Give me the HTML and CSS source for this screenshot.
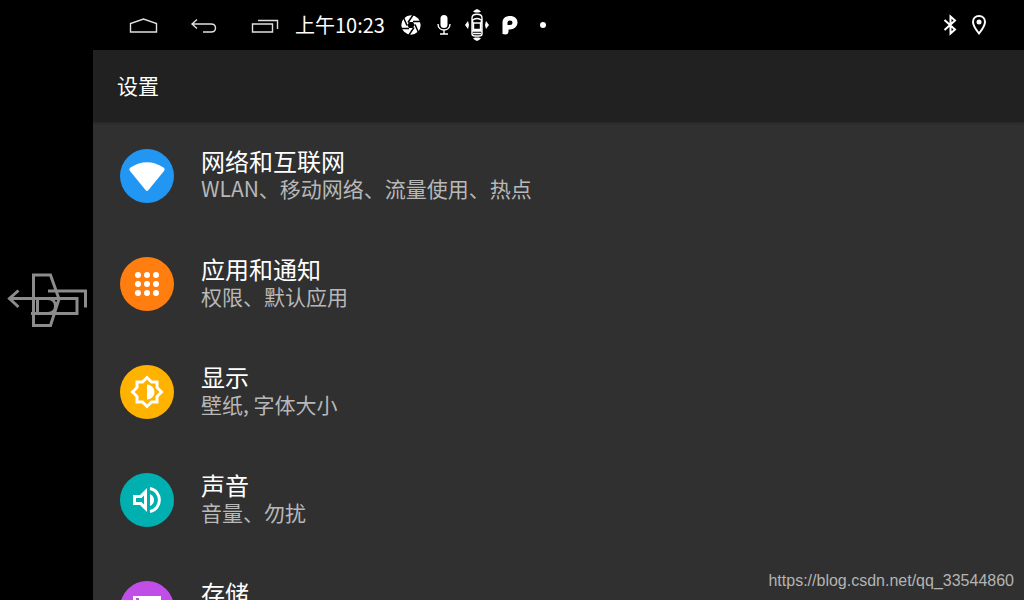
FILE: index.html
```html
<!DOCTYPE html>
<html lang="zh-CN">
<head>
<meta charset="utf-8">
<title>设置</title>
<link rel="stylesheet" href="styles.css">
</head>
<body>
<header class="status">
  <nav class="keys">
    <button class="key" type="button" aria-label="Home"><svg class="line" width="30" height="30" viewBox="0 0 30 30"><path d="M2.500 22V13.500L15.500 9L28.500 13.500V22Z"/></svg></button>
    <button class="key" type="button" aria-label="Back"><svg class="line" width="30" height="30" viewBox="0 0 30 30"><path d="M8 9.500L3 14L8 18.500M3 14H22C28 14 28 22 22 22H14"/></svg></button>
    <button class="key" type="button" aria-label="Recents"><svg class="line" width="30" height="30" viewBox="0 0 30 30"><path d="M2.500 14H22.500V22H2.500ZM8 10.500H27.500V19"/></svg></button>
  </nav>
  <time class="clock">上午10:23</time>
  <div class="tray">
    <span class="slot"><svg width="20" height="20" viewBox="0 0 20 20"><circle cx="10" cy="10" r="9.700" fill="#fff"/><path class="blades" d="M7 7.500L12 0M12 6.500H20M14 9.500L17.500 17.500M13 12.500L8 20M8 13.500H0M6 10.500L2.500 2.500"/><path d="M8.300 7L12 7L13.700 10L11.700 13L8 13L6.300 10Z"/></svg></span>
    <span class="slot"><svg width="16" height="22" viewBox="0 0 16 22"><rect x="4.500" y="1" width="7" height="13" rx="3.500" fill="#fff"/><path class="thin" d="M2 10C2 18 14 18 14 10M8 16V20M4 20H12"/></svg></span>
    <span class="slot"><svg width="26" height="34" viewBox="0 0 26 34"><path d="M9 3.500L11 2L13 1L15 2L17 3.500L15 4.500H11ZM9 30.500L11 32L13 33L15 32L17 30.500L15 29.500H11ZM4 13L1 17L4 21L5 17ZM22 13L25 17L22 21L21 17Z" fill="#fff"/><path class="thin" d="M8 10C8 5 18 5 18 10V26Q18 28 15 28H11Q8 28 8 26ZM8 12.500Q13 8.500 18 12.500L16.500 15H9.500L8 12.500M9.500 15V21.500H16.500V15M8 23H18M9 25.500H17"/></svg></span>
    <span class="slot"><svg width="18" height="22" viewBox="0 0 18 22"><path d="M1.500 20V8.500C1.500 4 5 2 9 2C13.500 2 16.500 4.500 16.500 8.500C16.500 12.500 13 15.500 9 15.500H7.500V18Q7 20.500 4.500 20.500Z" fill="#fff"/><path d="M6.500 11V8.500Q6.500 6.500 9 6.500T11.500 8.700T9 11Z"/></svg></span>
    <span class="slot"><svg width="8" height="8" viewBox="0 0 8 8"><circle cx="4" cy="4" r="3" fill="#fff"/></svg></span>
  </div>
  <div class="system">
    <span class="slot-narrow"><svg width="16" height="22" viewBox="0 0 16 22"><path class="medium" d="M2.500 6L13 15.500L8.500 19.500V2.500L13 6.500L2.500 16"/></svg></span>
    <span class="slot-narrow"><svg width="16" height="22" viewBox="0 0 16 22"><path class="medium" d="M8 2C4.500 2 2 4.500 2 8C2 12 8 19.500 8 19.500S14 12 14 8C14 4.500 11.500 2 8 2Z"/><circle cx="8" cy="8" r="2.500" fill="#fff"/></svg></span>
  </div>
</header>
<div class="screen">
  <aside class="rail">
    <svg class="ghost" width="93" height="80" viewBox="0 0 93 80"><path d="M33.500 15H50.500L59 39L50.500 65.500H33.500ZM18.500 30.500L9.500 38.500L18.500 47M9.500 38.500H77V53.500H31M37.500 38.500V53.500M48 38.500C58 39 58 53 48 53.500M48 31H85.500V47.500"/></svg>
  </aside>
  <main class="panel">
    <h1 class="title">设置</h1>
    <div class="list">
      <a class="row" href="#network">
        <span class="badge blue"><svg width="54" height="54" viewBox="0 0 54 54"><path d="M10 22Q8.500 20 10.500 18.500Q27 8 43.500 18.500Q45.500 20 44 22L28.500 41Q27 43 25.500 41Z" fill="#fff"/></svg></span>
        <span class="text"><span class="name">网络和互联网</span><span class="note">WLAN、移动网络、流量使用、热点</span></span>
      </a>
      <a class="row" href="#apps">
        <span class="badge orange"><svg width="54" height="54" viewBox="0 0 54 54"><g fill="#fff"><circle cx="18" cy="18" r="3"/><circle cx="27" cy="18" r="3"/><circle cx="36" cy="18" r="3"/><circle cx="18" cy="27" r="3"/><circle cx="27" cy="27" r="3"/><circle cx="36" cy="27" r="3"/><circle cx="18" cy="36" r="3"/><circle cx="27" cy="36" r="3"/><circle cx="36" cy="36" r="3"/></g></svg></span>
        <span class="text"><span class="name">应用和通知</span><span class="note">权限、默认应用</span></span>
      </a>
      <a class="row" href="#display">
        <span class="badge amber"><svg width="54" height="54" viewBox="0 0 54 54"><path class="heavy" d="M27 12.500L31.500 17H37V22.500L41.500 27L37 31.500V37H31.500L27 41.500L22.500 37H17V31.500L12.500 27L17 22.500V17H22.500Z"/><path d="M27 19.500A7.500 7.500 0 0 1 27 34.500Z" fill="#fff"/></svg></span>
        <span class="text"><span class="name">显示</span><span class="note">壁纸, 字体大小</span></span>
      </a>
      <a class="row" href="#sound">
        <span class="badge teal"><svg width="54" height="54" viewBox="0 0 54 54"><path d="M13 22H20L27 15V39L20 32H13ZM16 25V29H21.500L24 31.500V22.500L21.500 25Z" fill="#fff" fill-rule="evenodd"/><path d="M30 21Q34 23 34 27T30 33Z" fill="#fff"/><path class="heavy" d="M30 15.500C42.500 18 42.500 36 30 38.500"/></svg></span>
        <span class="text"><span class="name">声音</span><span class="note">音量、勿扰</span></span>
      </a>
      <a class="row" href="#storage">
        <span class="badge purple"><svg width="54" height="54" viewBox="0 0 54 54"><path d="M13 15H41V22H13ZM13 24H41V31H13ZM13 33H41V40H13Z" fill="#fff"/><path d="M16 17H19V20H16ZM16 26H19V29H16ZM16 35H19V38H16Z" fill="#c14ee6"/></svg></span>
        <span class="text"><span class="name">存储</span></span>
      </a>
    </div>
  </main>
</div>
<div class="watermark">https://blog.csdn.net/qq_33544860</div>
</body>
</html>
```
FILE: styles.css
```css
* {
  box-sizing: border-box;
}

body {
  margin: 0;
  height: 100vh;
  display: flex;
  flex-direction: column;
  overflow: hidden;
  background: #000;
  color: #fff;
  font-family: "Noto Sans CJK SC", sans-serif;
}

svg {
  display: block;
}

.status {
  display: flex;
  align-items: center;
  flex: none;
  height: 50px;
  padding: 0 31px 0 128px;
}

.keys {
  display: flex;
  gap: 31px;
}

.key {
  padding: 0;
  border: 0;
  background: none;
}

.line,
.thin,
.medium,
.heavy {
  fill: none;
  stroke: #fff;
}

.line {
  stroke: #e0e0e0;
  stroke-width: 1.4;
}

.thin {
  stroke-width: 1.4;
}

.medium {
  stroke-width: 2;
}

.heavy {
  stroke-width: 3;
}

.blades {
  stroke: #000;
  stroke-width: 1.5;
}

.clock {
  margin-left: 15px;
  font-size: 20px;
  line-height: 50px;
}

.tray {
  display: flex;
  margin-left: 10px;
}

.system {
  display: flex;
  margin-left: auto;
}

.slot,
.slot-narrow {
  display: flex;
  align-items: center;
  justify-content: center;
  width: 33px;
  height: 50px;
}

.slot-narrow {
  width: 29px;
}

.screen {
  display: flex;
  flex: 1;
  min-height: 0;
}

.rail {
  display: flex;
  flex: none;
  align-items: center;
  width: 93px;
  padding-bottom: 50px;
}

.ghost {
  fill: none;
  stroke: #8c8c8c;
  stroke-width: 3;
}

.panel {
  flex: 1;
  min-width: 0;
  overflow: hidden;
  background: #303030;
}

.title {
  margin: 0;
  padding: 0 24px 2px;
  background: #212121;
  box-shadow: 0 1px 2px #262626;
  font-size: 21px;
  font-weight: 400;
  line-height: 70px;
}

.row {
  display: flex;
  align-items: center;
  gap: 27px;
  height: 108px;
  padding: 0 27px;
  color: inherit;
  text-decoration: none;
}

.badge {
  flex: none;
  border-radius: 50%;
}

.blue {
  background: #2196f3;
}

.orange {
  background: #ff7e0f;
}

.amber {
  background: #ffb300;
}

.teal {
  background: #00b0b0;
}

.purple {
  background: #c14ee6;
}

.text {
  display: flex;
  flex-direction: column;
  min-height: 58px;
  padding-bottom: 4px;
}

.name {
  font-size: 24px;
  line-height: 28px;
}

.note {
  color: #b8b8b8;
  font-size: 21px;
  line-height: 26px;
}

.watermark {
  position: absolute;
  right: 10px;
  bottom: 10px;
  color: #b4b4b4;
  font-family: "Liberation Sans", sans-serif;
  font-size: 16px;
  line-height: 18px;
}
```
